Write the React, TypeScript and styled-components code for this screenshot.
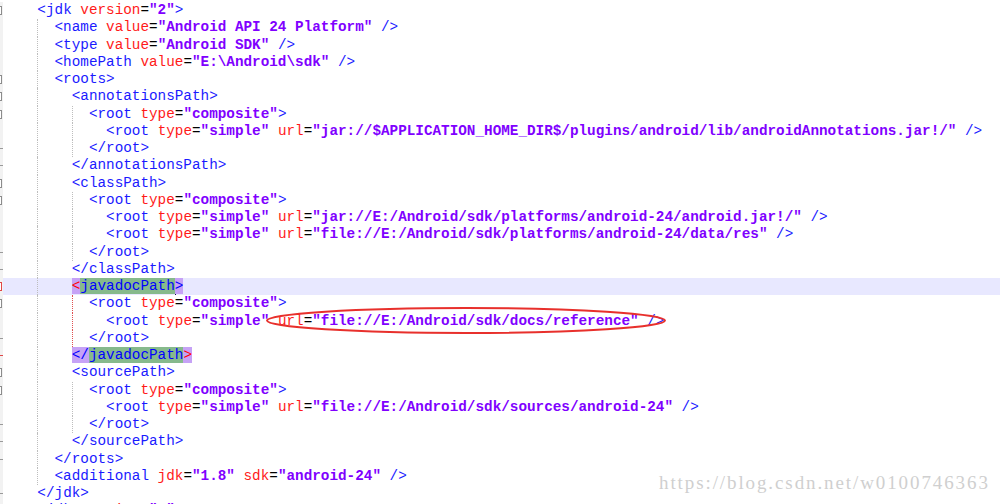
import * as React from "react"
import styled, { createGlobalStyle } from "styled-components"

const CHAR = 14.32 * 0.60009765625
const LINE = 17.25

type Kind = "tag" | "attr" | "eq" | "val" | "plain"

interface Line {
  text: string
  fold?: "box" | "end"
  red?: boolean
  redGuide?: boolean
  current?: boolean
  special?: "open" | "close"
}

const lines: Line[] = [
  { text: `    <jdk version="2">`, fold: "box" },
  { text: `      <name value="Android API 24 Platform" />` },
  { text: `      <type value="Android SDK" />` },
  { text: `      <homePath value="E:\\Android\\sdk" />` },
  { text: `      <roots>`, fold: "box" },
  { text: `        <annotationsPath>`, fold: "box" },
  { text: `          <root type="composite">`, fold: "box" },
  { text: `            <root type="simple" url="jar://$APPLICATION_HOME_DIR$/plugins/android/lib/androidAnnotations.jar!/" />` },
  { text: `          </root>`, fold: "end" },
  { text: `        </annotationsPath>`, fold: "end" },
  { text: `        <classPath>`, fold: "box" },
  { text: `          <root type="composite">`, fold: "box" },
  { text: `            <root type="simple" url="jar://E:/Android/sdk/platforms/android-24/android.jar!/" />` },
  { text: `            <root type="simple" url="file://E:/Android/sdk/platforms/android-24/data/res" />` },
  { text: `          </root>`, fold: "end" },
  { text: `        </classPath>`, fold: "end" },
  { text: `        `, fold: "box", red: true, current: true, special: "open" },
  { text: `          <root type="composite">`, fold: "box", redGuide: true },
  { text: `            <root type="simple" url="file://E:/Android/sdk/docs/reference" />`, redGuide: true },
  { text: `          </root>`, fold: "end", redGuide: true },
  { text: `        `, fold: "end", red: true, special: "close" },
  { text: `        <sourcePath>`, fold: "box" },
  { text: `          <root type="composite">`, fold: "box" },
  { text: `            <root type="simple" url="file://E:/Android/sdk/sources/android-24" />` },
  { text: `          </root>`, fold: "end" },
  { text: `        </sourcePath>`, fold: "end" },
  { text: `      </roots>`, fold: "end" },
  { text: `      <additional jdk="1.8" sdk="android-24" />` },
  { text: `    </jdk>`, fold: "end" },
  { text: `    <jdk version="2">`, fold: "box" },
]

const GlobalStyle = createGlobalStyle`
  html, body {
    margin: 0;
    padding: 0;
    background: #fff;
  }
  body {
    width: 1000px;
    height: 504px;
    overflow: hidden;
  }
`

const Editor = styled.div`
  position: relative;
  width: 1000px;
  height: 504px;
  box-sizing: border-box;
  padding-top: 2px;
  overflow: hidden;
  background: #fff;
  font-family: "Liberation Mono", "Courier New", monospace;
  font-size: 14.32px;
`

const Row = styled.div`
  display: flex;
  height: ${LINE}px;
  line-height: ${LINE}px;
`

const Margin = styled.div`
  flex: 0 0 3px;
  background: #f2f2f2;
  overflow: hidden;
  display: flex;
  align-items: center;
`

const FoldBox = styled.span<{ $red?: boolean }>`
  flex: none;
  width: 9px;
  height: 9px;
  margin-left: -7px;
  box-sizing: border-box;
  border: 1px solid ${(p) => (p.$red ? "#e04848" : "#8c8c8c")};
  background: #fff;
`

const FoldEnd = styled.span<{ $red?: boolean }>`
  flex: none;
  width: 3px;
  height: 1px;
  background: ${(p) => (p.$red ? "#e04848" : "#9a9a9a")};
`

const Code = styled.div<{ $current?: boolean }>`
  flex: 1;
  white-space: pre;
  background: ${(p) => (p.$current ? "#e8e8ff" : "transparent")};
`

const Indent = styled.span<{ $guide?: boolean; $red?: boolean }>`
  display: inline-block;
  vertical-align: top;
  height: ${LINE}px;
  box-sizing: border-box;
  border-left: 1px dotted
    ${(p) => (p.$guide ? (p.$red ? "#e05050" : "#bdbdbd") : "transparent")};
`

const colors: Record<Kind, string> = {
  tag: "#1a1aff",
  attr: "#ff1a1a",
  eq: "#000000",
  val: "#8000ff",
  plain: "#000000",
}

const Tok = styled.span<{ $kind: Kind }>`
  color: ${(p) => colors[p.$kind]};
  font-weight: ${(p) => (p.$kind === "val" ? "bold" : "normal")};
`

const Match = styled.span<{ $red?: boolean }>`
  color: ${(p) => (p.$red ? "#ff0000" : "#0000ff")};
  background: #c6a2f6;
`

const Smart = styled.span`
  color: #0000ff;
  background: #86b98c;
`

const Caret = styled.span`
  display: inline-block;
  vertical-align: top;
  width: 1px;
  height: 16px;
  margin-top: 1px;
  margin-right: -1px;
  background: #10104a;
`

const Ellipse = styled.svg`
  position: absolute;
  left: 0;
  top: 0;
  pointer-events: none;
`

const Watermark = styled.div`
  position: absolute;
  left: 659px;
  top: 472px;
  font-family: "Liberation Serif", "Times New Roman", serif;
  font-size: 19px;
  letter-spacing: 1.9px;
  color: #cfcfcf;
  white-space: nowrap;
`

const tokenize = (s: string): [Kind, string][] => {
  const out: [Kind, string][] = []
  const re = /("[^"]*")|([A-Za-z]+)(?==)|(=)|(<\/?[A-Za-z]+|\/?>)|(\s+)/g
  let m: RegExpExecArray | null
  while ((m = re.exec(s))) {
    if (m[1]) out.push(["val", m[1]])
    else if (m[2]) out.push(["attr", m[2]])
    else if (m[3]) out.push(["eq", m[3]])
    else if (m[4]) out.push(["tag", m[4]])
    else out.push(["plain", m[5]])
  }
  return out
}

const Guides: React.FC<{ n: number; red?: boolean }> = ({ n, red }) => (
  <>
    <Indent style={{ width: Math.min(n, 4) * CHAR }} />
    {n > 4 && <Indent $guide style={{ width: (Math.min(n, 8) - 4) * CHAR }} />}
    {n > 8 && <Indent $guide $red={red} style={{ width: (n - 8) * CHAR }} />}
  </>
)

const CodeLine: React.FC<{ line: Line }> = ({ line }) => {
  const n = line.text.length - line.text.trimStart().length
  const body = line.text.slice(n)
  return (
    <Row>
      <Margin>
        {line.fold === "box" && <FoldBox $red={line.red} />}
        {line.fold === "end" && <FoldEnd $red={line.red} />}
      </Margin>
      <Code $current={line.current}>
        <Guides n={n} red={line.redGuide} />
        {line.special === "open" && (
          <>
            <Match $red>{"<"}</Match>
            <Smart>javadocPath</Smart>
            <Caret />
            <Match>{">"}</Match>
          </>
        )}
        {line.special === "close" && (
          <>
            <Match>{"</"}</Match>
            <Smart>javadocPath</Smart>
            <Match $red>{">"}</Match>
          </>
        )}
        {tokenize(body).map(([k, t], i) => (
          <Tok key={i} $kind={k}>
            {t}
          </Tok>
        ))}
      </Code>
    </Row>
  )
}

export default function App() {
  return (
    <>
      <GlobalStyle />
      <Editor>
        {lines.map((l, i) => (
          <CodeLine key={i} line={l} />
        ))}
        <Ellipse width="1000" height="504" viewBox="0 0 1000 504">
          <ellipse cx="466" cy="320.5" rx="199" ry="12.5" fill="none" stroke="#e8302c" strokeWidth="2" />
        </Ellipse>
        <Watermark>https://blog.csdn.net/w0100746363</Watermark>
      </Editor>
    </>
  )
}
